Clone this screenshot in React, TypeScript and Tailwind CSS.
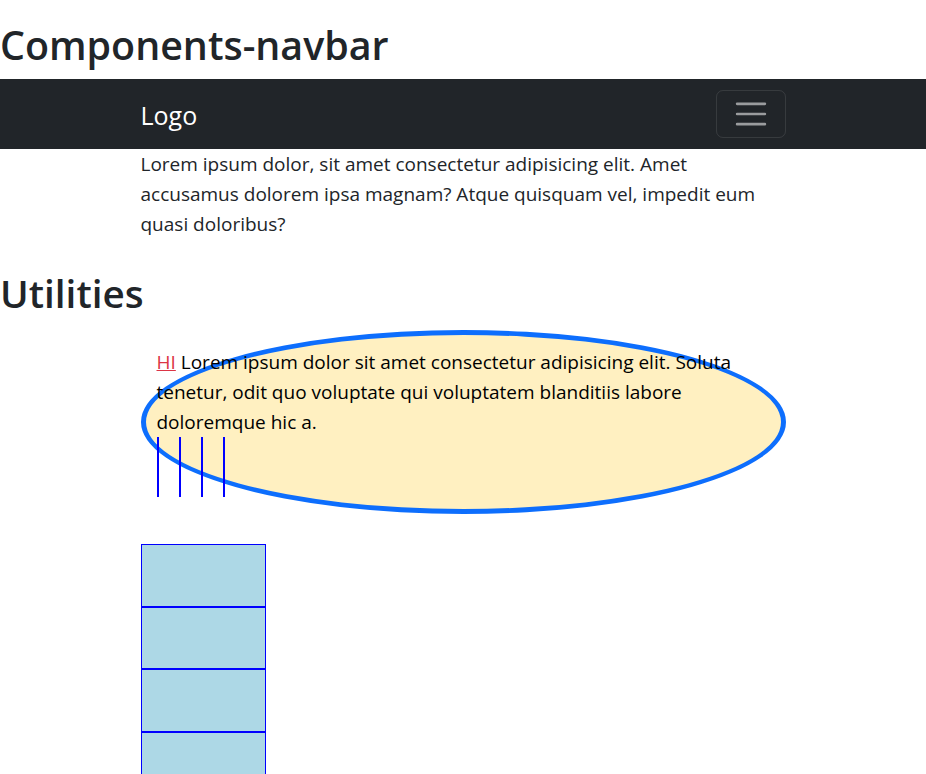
export default function App() {
  return (
    <div className="min-h-screen bg-white pt-[20px] font-['Open_Sans','Noto_Sans',sans-serif] text-[#212529]">
      <h1 className="mb-[9px] text-[39.4px] font-semibold leading-[50px]">Components-navbar</h1>

      <nav className="h-[70px] bg-[#212529]">
        <div className="mx-auto flex h-full w-[645px] items-center justify-between">
          <span className="pt-[4px] text-[25px] text-white">Logo</span>
          <button className="flex h-[48px] w-[70px] items-center justify-center rounded-[7px] border border-white/10">
            <svg viewBox="0 0 30 30" className="h-[38px] w-[38px]">
              <path
                d="M4 7h22M4 15h22M4 23h22"
                stroke="rgba(255,255,255,0.55)"
                strokeWidth="2"
                strokeLinecap="round"
              />
            </svg>
          </button>
        </div>
      </nav>

      <p className="mx-auto w-[645px] text-[19px] leading-[30px]">
        Lorem ipsum dolor, sit amet consectetur adipisicing elit. Amet
        <br />
        accusamus dolorem ipsa magnam? Atque quisquam vel, impedit eum
        <br />
        quasi doloribus?
      </p>

      <h2 className="mt-[30px] mb-[13px] text-[38.7px] font-semibold leading-[48px]">Utilities</h2>

      <div className="mx-auto w-[645px]">
        <div className="rounded-[50%] border-[5px] border-[#0d6efd] bg-[#fff0c1] px-[11px] pt-[12px] pb-[12px] text-[19px] leading-[30px] text-black">
          <p>
            <a href="#" className="text-[#dc3545] underline">
              HI
            </a>{" "}
            Lorem ipsum dolor sit amet consectetur adipisicing elit. Soluta
            <br />
            tenetur, odit quo voluptate qui voluptatem blanditiis labore
            <br />
            doloremque hic a.
          </p>
          <div className="flex h-[60px] gap-[20px]">
            <div className="w-[2px] bg-[#0000ff]" />
            <div className="w-[2px] bg-[#0000ff]" />
            <div className="w-[2px] bg-[#0000ff]" />
            <div className="w-[2px] bg-[#0000ff]" />
          </div>
        </div>

        <div className="mt-[30px] w-[125px]">
          <div className="h-[62.5px] border border-[#0000ff] bg-[#add8e6]" />
          <div className="h-[62.5px] border border-[#0000ff] bg-[#add8e6]" />
          <div className="h-[62.5px] border border-[#0000ff] bg-[#add8e6]" />
          <div className="h-[62.5px] border border-[#0000ff] bg-[#add8e6]" />
        </div>
      </div>
    </div>
  )
}
